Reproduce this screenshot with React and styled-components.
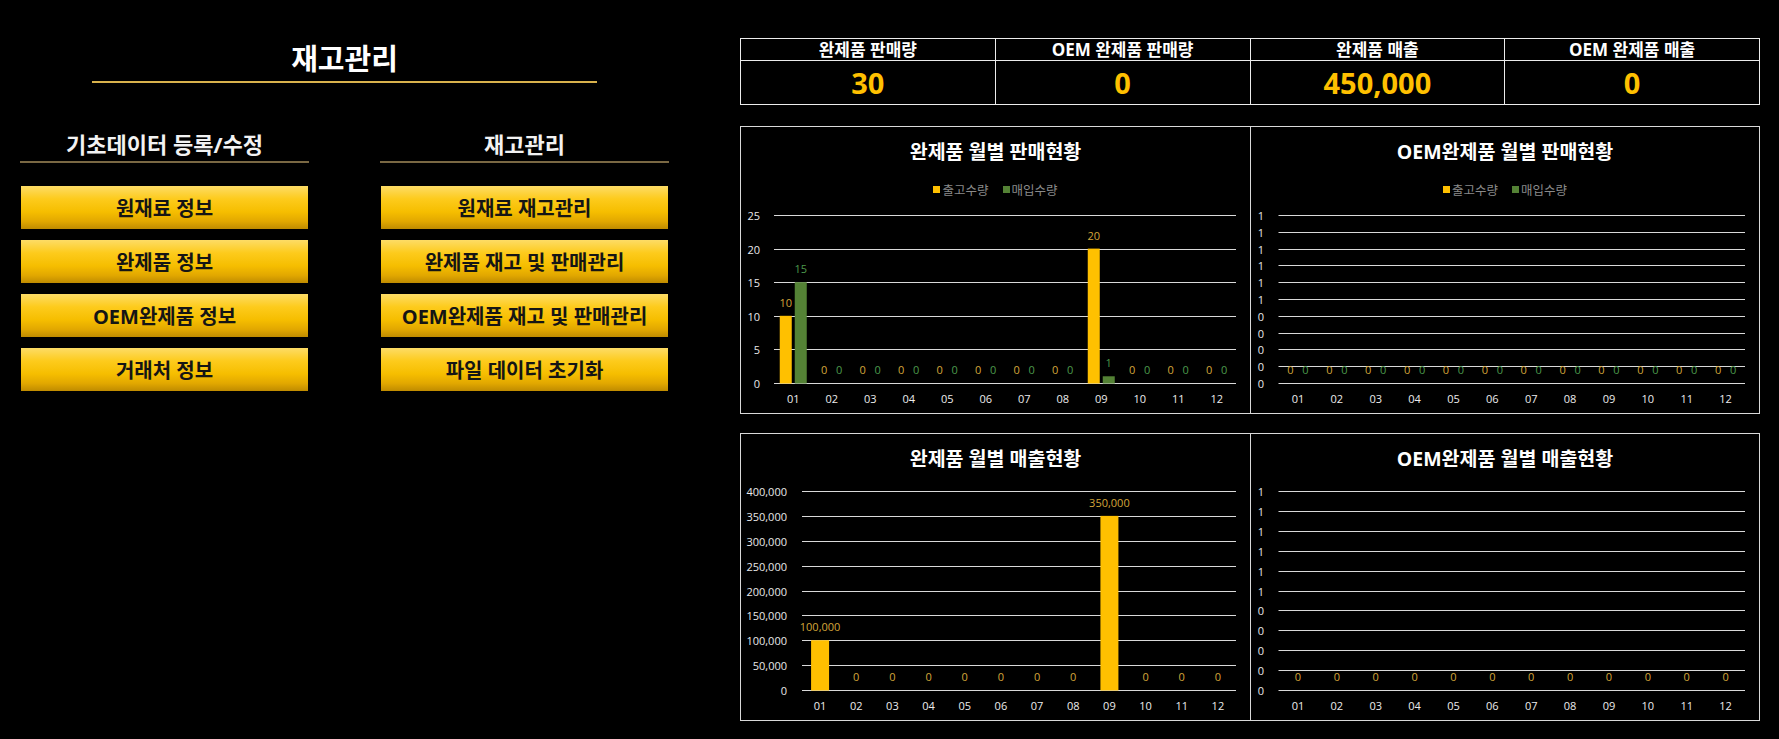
import React from 'react';
import styled, { createGlobalStyle } from 'styled-components';

const GlobalStyle = createGlobalStyle`
  *, *::before, *::after { box-sizing: border-box; }
  html, body { margin: 0; padding: 0; background: #000; }
  body { font-family: "Open Sans", "Noto Sans CJK KR", sans-serif; }
`;

const FONT = '"Open Sans", "Noto Sans CJK KR", sans-serif';
const YELLOW = '#ffc000';
const GREEN = '#548235';
const YELLOW_LABEL = '#d4a63a';
const GREEN_LABEL = '#4c9a4c';

const Page = styled.div`
  display: flex;
  width: 1779px;
  height: 739px;
  background: #000;
  overflow: hidden;
`;

const LeftPanel = styled.section`
  width: 740px;
  padding: 41px 71px 0 20px;
  display: flex;
  flex-direction: column;
  align-items: center;
`;

const MainTitle = styled.h1`
  margin: 0;
  font-size: 29px;
  line-height: 36px;
  font-weight: 700;
  color: #fff;
`;

const MainRule = styled.div`
  width: 505px;
  height: 2px;
  margin-top: 4px;
  background: #d9b24c;
`;

const Columns = styled.div`
  width: 100%;
  margin-top: 46px;
  display: grid;
  grid-template-columns: 289px 289px;
  column-gap: 71px;
`;

const Column = styled.div`
  display: flex;
  flex-direction: column;
`;

const SubTitle = styled.h2`
  margin: 0;
  font-size: 22px;
  line-height: 30px;
  font-weight: 700;
  color: #f2f2f2;
  text-align: center;
`;

const SubRule = styled.div`
  height: 2px;
  margin-top: 2px;
  background: #7a6843;
`;

const ButtonList = styled.div`
  margin-top: 23px;
  display: flex;
  flex-direction: column;
  gap: 11px;
  padding: 0 1px;
`;

const MenuButton = styled.button`
  height: 43px;
  border: none;
  padding: 0;
  background: linear-gradient(to bottom, #fddc66 0%, #fdcb1c 30%, #f6be00 60%, #e2a800 82%, #bf8b00 100%);
  color: #151515;
  font-family: ${FONT};
  font-size: 20px;
  font-weight: 700;
  cursor: pointer;
`;

const RightPanel = styled.section`
  width: 1020px;
  padding-top: 38px;
  display: flex;
  flex-direction: column;
`;

const StatTable = styled.div`
  display: grid;
  grid-template-columns: repeat(4, 1fr);
  border-top: 1px solid #ececec;
  border-left: 1px solid #ececec;
`;

const Cell = styled.div`
  border-right: 1px solid #ececec;
  border-bottom: 1px solid #ececec;
  text-align: center;
  font-weight: 700;
`;

const HeadCell = styled(Cell)`
  height: 22px;
  line-height: 21px;
  font-size: 17px;
  color: #fff;
`;

const ValueCell = styled(Cell)`
  height: 44px;
  line-height: 43px;
  font-size: 29px;
  color: ${YELLOW};
`;

const ChartRow = styled.div`
  margin-top: ${p => p.$gap}px;
  height: 288px;
  display: grid;
  grid-template-columns: 1fr 1fr;
  border: 1px solid #d9d9d9;
`;

const ChartCell = styled.div`
  display: flex;
  flex-direction: column;
  border-left: ${p => (p.$divider ? '1px solid #d9d9d9' : 'none')};
`;

const ChartTitle = styled.div`
  padding-top: 12px;
  font-size: 19.5px;
  line-height: 26px;
  font-weight: 700;
  color: #fff;
  text-align: center;
`;

const Legend = styled.div`
  margin-top: 16px;
  height: 16px;
  display: flex;
  justify-content: center;
  align-items: center;
  gap: 14px;
  font-size: 12.5px;
  color: #8a8a8a;
`;

const LegendItem = styled.span`
  display: inline-flex;
  align-items: center;
  gap: 2px;
`;

const Swatch = styled.span`
  width: 7px;
  height: 7px;
  background: ${p => p.$color};
`;

const Plot = styled.svg`
  display: block;
  width: 100%;
`;

const MONTHS = ['01', '02', '03', '04', '05', '06', '07', '08', '09', '10', '11', '12'];

function BarChart({ height, left, right, top, bottom, labelRight, yLabels, max, series, xLabelY }) {
  const cw = (right - left) / 12;
  const n = yLabels.length;
  const step = (bottom - top) / (n - 1);
  const two = series.length === 2;
  const bw = two ? 12 : 18;
  return (
    <Plot height={height}>
      {yLabels.map((lab, i) => {
        const y = Math.round(top + step * i) + 0.5;
        return (
          <g key={'g' + i}>
            <line x1={left} x2={right} y1={y} y2={y} stroke="#d9d9d9" strokeWidth="1" />
            <text x={labelRight} y={y} textAnchor="end" dominantBaseline="central" fontFamily={FONT} fontSize="11" fill="#e8e8e8">
              {lab}
            </text>
          </g>
        );
      })}
      {MONTHS.map((m, i) => {
        const c = left + cw * (i + 0.5);
        return (
          <g key={m}>
            {series.map((s, si) => {
              const off = two ? (si === 0 ? -7.5 : 7.5) : 0;
              const h = (s.values[i] / max) * (bottom - top);
              const bt = bottom - h;
              return (
                <g key={si}>
                  {h > 0 && <rect x={c + off - bw / 2} y={bt} width={bw} height={h + 0.5} fill={s.color} />}
                  <text x={c + off} y={bt - 13.5} textAnchor="middle" dominantBaseline="central" fontFamily={FONT} fontSize="11" fill={s.label}>
                    {s.values[i].toLocaleString('en-US')}
                  </text>
                </g>
              );
            })}
            <text x={c} y={xLabelY} textAnchor="middle" dominantBaseline="central" fontFamily={FONT} fontSize="11" fill="#ececec">
              {m}
            </text>
          </g>
        );
      })}
    </Plot>
  );
}

const zeros = Array(12).fill(0);
const flatLabels = ['1', '1', '1', '1', '1', '1', '0', '0', '0', '0', '0'];

function ChartLegend() {
  return (
    <Legend>
      <LegendItem><Swatch $color={YELLOW} />출고수량</LegendItem>
      <LegendItem><Swatch $color={GREEN} />매입수량</LegendItem>
    </Legend>
  );
}

export default function App() {
  const basics = ['원재료 정보', '완제품 정보', 'OEM완제품 정보', '거래처 정보'];
  const stock = ['원재료 재고관리', '완제품 재고 및 판매관리', 'OEM완제품 재고 및 판매관리', '파일 데이터 초기화'];
  const stats = [
    ['완제품 판매량', '30'],
    ['OEM 완제품 판매량', '0'],
    ['완제품 매출', '450,000'],
    ['OEM 완제품 매출', '0'],
  ];
  return (
    <Page>
      <GlobalStyle />
      <LeftPanel>
        <MainTitle>재고관리</MainTitle>
        <MainRule />
        <Columns>
          <Column>
            <SubTitle>기초데이터 등록/수정</SubTitle>
            <SubRule />
            <ButtonList>
              {basics.map(b => <MenuButton key={b}>{b}</MenuButton>)}
            </ButtonList>
          </Column>
          <Column>
            <SubTitle>재고관리</SubTitle>
            <SubRule />
            <ButtonList>
              {stock.map(b => <MenuButton key={b}>{b}</MenuButton>)}
            </ButtonList>
          </Column>
        </Columns>
      </LeftPanel>
      <RightPanel>
        <StatTable>
          {stats.map(([h]) => <HeadCell key={h}>{h}</HeadCell>)}
          {stats.map(([h, v]) => <ValueCell key={h + 'v'}>{v}</ValueCell>)}
        </StatTable>
        <ChartRow $gap={21}>
          <ChartCell>
            <ChartTitle>완제품 월별 판매현황</ChartTitle>
            <ChartLegend />
            <BarChart
              height={216} left={33} right={495} top={18} bottom={186} xLabelY={201} labelRight={19}
              yLabels={['25', '20', '15', '10', '5', '0']} max={25}
              series={[
                { color: YELLOW, label: YELLOW_LABEL, values: [10, 0, 0, 0, 0, 0, 0, 0, 20, 0, 0, 0] },
                { color: GREEN, label: GREEN_LABEL, values: [15, 0, 0, 0, 0, 0, 0, 0, 1, 0, 0, 0] },
              ]}
            />
          </ChartCell>
          <ChartCell $divider>
            <ChartTitle>OEM완제품 월별 판매현황</ChartTitle>
            <ChartLegend />
            <BarChart
              height={216} left={27.5} right={494} top={18} bottom={186} xLabelY={201} labelRight={13}
              yLabels={flatLabels} max={1}
              series={[
                { color: YELLOW, label: YELLOW_LABEL, values: zeros },
                { color: GREEN, label: GREEN_LABEL, values: zeros },
              ]}
            />
          </ChartCell>
        </ChartRow>
        <ChartRow $gap={19}>
          <ChartCell>
            <ChartTitle>완제품 월별 매출현황</ChartTitle>
            <BarChart
              height={248} left={61} right={495} top={19} bottom={218} xLabelY={233} labelRight={46}
              yLabels={['400,000', '350,000', '300,000', '250,000', '200,000', '150,000', '100,000', '50,000', '0']} max={400000}
              series={[
                { color: YELLOW, label: YELLOW_LABEL, values: [100000, 0, 0, 0, 0, 0, 0, 0, 350000, 0, 0, 0] },
              ]}
            />
          </ChartCell>
          <ChartCell $divider>
            <ChartTitle>OEM완제품 월별 매출현황</ChartTitle>
            <BarChart
              height={248} left={27.5} right={494} top={19} bottom={218} xLabelY={233} labelRight={13}
              yLabels={flatLabels} max={1}
              series={[{ color: YELLOW, label: YELLOW_LABEL, values: zeros }]}
            />
          </ChartCell>
        </ChartRow>
      </RightPanel>
    </Page>
  );
}
